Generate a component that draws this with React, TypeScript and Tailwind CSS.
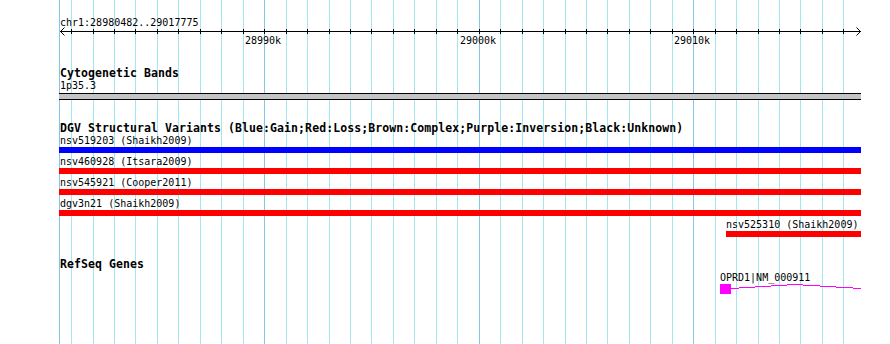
import React from "react";

const START = 28980482;
const END = 29017775;
const toX = (p: number) => Math.round(60 + ((p - START) * 800) / (END - START));
const ticks = Array.from({ length: 37 }, (_, i) => 28981000 + i * 1000);
const MINOR = "#a2e6ee";
const MAJOR = "#84c6e8";

const small =
  "font-['DejaVu_Sans_Mono',monospace] text-[10px] leading-[13px] h-[13px] text-black whitespace-nowrap";
const title =
  "font-['DejaVu_Sans_Mono',monospace] font-bold text-[11.5px] tracking-[0.08px] leading-[12px] h-[12px] text-black whitespace-nowrap";

const variants = [
  { label: "nsv519203 (Shaikh2009)", color: "bg-[#0000ff]" },
  { label: "nsv460928 (Itsara2009)", color: "bg-[#ff0000]" },
  { label: "nsv545921 (Cooper2011)", color: "bg-[#ff0000]" },
  { label: "dgv3n21 (Shaikh2009)", color: "bg-[#ff0000]" },
];

export default function App() {
  return (
    <div className="relative w-[890px] h-[344px] bg-white overflow-hidden">
      <svg
        className="absolute left-0 top-0"
        width={890}
        height={344}
        shapeRendering="crispEdges"
      >
        <rect x={59} y={0} width={1} height={344} fill={MAJOR} />
        {ticks.map((p) => (
          <rect
            key={p}
            x={toX(p)}
            y={0}
            width={1}
            height={344}
            fill={p % 10000 === 0 ? MAJOR : MINOR}
          />
        ))}
      </svg>

      <div className="relative flex flex-col pl-[60px] pt-[16px]">
        <div className={small}>chr1:28980482..29017775</div>

        <svg
          className="block -ml-[60px] shrink-0"
          width={890}
          height={18}
          overflow="visible"
        >
          <g shapeRendering="crispEdges">
            <rect x={60} y={2} width={801} height={1} fill="#000" />
            {ticks.map((p) => (
              <rect key={p} x={toX(p)} y={0} width={1} height={5} fill="#000" />
            ))}
          </g>
          <polyline points="64.5,-1.5 60.5,2.5 64.5,6.5" fill="none" stroke="#000" strokeWidth={1} />
          <polyline points="856.5,-1.5 860.5,2.5 856.5,6.5" fill="none" stroke="#000" strokeWidth={1} />
          {ticks
            .filter((p) => p % 10000 === 0)
            .map((p) => (
              <text
                key={p}
                x={toX(p) - 1}
                y={15}
                textAnchor="middle"
                fontFamily="'DejaVu Sans Mono', monospace"
                fontSize={10}
                fill="#000"
              >
                {p / 1000}k
              </text>
            ))}
        </svg>

        <div className={title + " mt-[20px]"}>Cytogenetic Bands</div>
        <div className={small}>1p35.3</div>
        <div className="mt-px -ml-px w-[802px] h-[7px] bg-[#c4c4c4] border-y border-black" />

        <div className={title + " mt-[22px]"}>
          DGV Structural Variants (Blue:Gain;Red:Loss;Brown:Complex;Purple:Inversion;Black:Unknown)
        </div>

        {variants.map((v, i) => (
          <div key={v.label} className={i === 0 ? "flex flex-col" : "flex flex-col mt-[2px]"}>
            <div className={small}>{v.label}</div>
            <div className={"-ml-px w-[802px] h-[6px] " + v.color} />
          </div>
        ))}

        <div className="flex flex-col mt-[2px] ml-[666px]">
          <div className={small}>nsv525310 (Shaikh2009)</div>
          <div className="w-[135px] h-[6px] bg-[#ff0000]" />
        </div>

        <div className={title + " mt-[21px]"}>RefSeq Genes</div>

        <div className="flex flex-col mt-px ml-[660px]">
          <div className={small}>OPRD1|NM_000911</div>
          <svg width={141} height={10} className="block" overflow="visible">
            <rect x={0} y={0} width={11} height={10} fill="#ff00ff" shapeRendering="crispEdges" />
            <polyline
              points="11,4.5 75,0.5 141,4.5"
              fill="none"
              stroke="#ff00ff"
              strokeWidth={1}
              shapeRendering="crispEdges"
            />
          </svg>
        </div>
      </div>
    </div>
  );
}
